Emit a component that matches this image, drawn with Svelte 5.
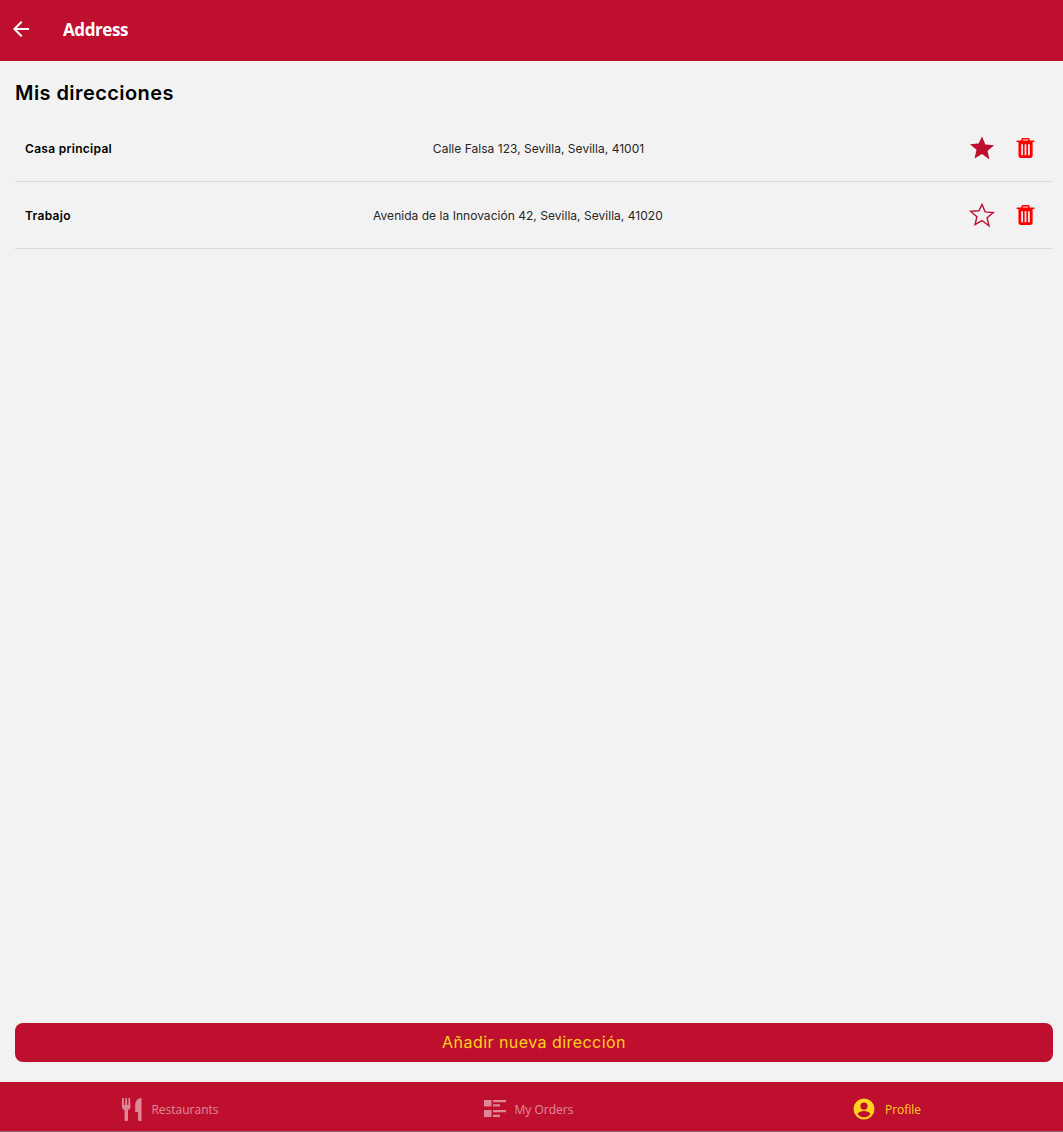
<script>
  const addresses = [
    { name: 'Casa principal', line: 'Calle Falsa 123, Sevilla, Sevilla, 41001', fav: true },
    { name: 'Trabajo', line: 'Avenida de la Innovación 42, Sevilla, Sevilla, 41020', fav: false }
  ];
  const star = 'M12 2.2l2.9 6.9 7.5.6-5.7 4.9 1.7 7.3L12 17.1l-6.4 3.8 1.7-7.3-5.7-4.9 7.5-.6z';
</script>

<div class="page">
  <header class="top">
    <svg class="back" viewBox="0 0 24 24" width="24" height="24"><path d="M20 11H7.83l5.59-5.59L12 4l-8 8 8 8 1.41-1.41L7.83 13H20z" fill="#fff"/></svg>
    <span class="title">Address</span>
  </header>

  <main class="content">
    <h1>Mis direcciones</h1>
    <div class="list">
      {#each addresses as a}
        <div class="row">
          <span class="name">{a.name}</span>
          <span class="line">{a.line}</span>
          <div class="actions">
            <svg class="star" viewBox="0 0 24 24" width="28" height="28">
              {#if a.fav}
                <path d={star} fill="#be0f2e"/>
              {:else}
                <path d={star} fill="none" stroke="#be0f2e" stroke-width="1.3" transform="translate(12 12) scale(.93) translate(-12 -12)"/>
              {/if}
            </svg>
            <svg class="trash" viewBox="0 0 20 24" width="19" height="24">
              <path fill="#f00" fill-rule="evenodd" d="M7 1.5h6a1.2 1.2 0 0 1 1.2 1.1l.3 1.4h4.2a.7.7 0 0 1 .7.7v1h-1.9v14.300c0 1.500-1 2.500-2.400 2.500H5c-1.400 0-2.400-1-2.400-2.500V5.700H.6v-1a.7.7 0 0 1 .7-.7h4.200l.3-1.400A1.200 1.200 0 0 1 7 1.500zM7.300 3l-.2 1h5.800l-.2-1zM5.500 8v11.500h1.800V8zm3.600 0v11.500h1.800V8zm3.600 0v11.500h1.800V8z"/>
            </svg>
          </div>
        </div>
      {/each}
    </div>
    <button class="add">Añadir nueva dirección</button>
  </main>

  <nav class="tabs">
    <div class="tab dim">
      <svg viewBox="0 0 20 24" width="20" height="24"><path fill="#fff" d="M0 1h1.800l.2 7h1.100l.3-7h1.500l.3 7h1.100l.2-7H8l.5 8.500c0 1.800-1 3-2.500 3.400L6 23a1 1 0 0 1-1 1H3.600a1 1 0 0 1-1-1l-.1-10.100C1 12.500 0 11.300 0 9.500zM19.500 1v22a1 1 0 0 1-1 1h-1.400a1 1 0 0 1-1-1v-8h-2.900V8c0-3.500 2.300-7 6.300-7z"/></svg>
      <span>Restaurants</span>
    </div>
    <div class="tab dim">
      <svg viewBox="0 0 22 18" width="22" height="18"><path fill="#fff" d="M0 0h7.500v6.500H0zM9 0h13v2.200H9zM9 4.300h7v2.200H9zM0 10h7.500v7H0zM9 10h13v2.200H9zM9 14.800h7V17H9z"/></svg>
      <span>My Orders</span>
    </div>
    <div class="tab active">
      <svg viewBox="0 0 24 24" width="24" height="24"><path fill="#ffd21f" d="M12 1.500a10.500 10.500 0 1 0 0 21 10.500 10.500 0 0 0 0-21zm0 4a3.600 3.600 0 1 1 0 7.200 3.600 3.600 0 0 1 0-7.200zm0 14.800c-2.600 0-4.900-1.200-6.300-3.100.1-2 4.200-3.100 6.300-3.100s6.200 1.100 6.300 3.100c-1.400 1.900-3.700 3.100-6.300 3.100z"/></svg>
      <span>Profile</span>
    </div>
  </nav>
</div>

<style>
  :global(body) { margin: 0; background: #f2f2f2; }
  .page {
    width: 1063px;
    height: 1132px;
    display: flex;
    flex-direction: column;
    background: #f2f2f2;
    overflow: hidden;
  }
  .top {
    height: 61px;
    flex: none;
    background: #be0f2e;
    display: flex;
    align-items: center;
    padding-left: 9px;
    box-sizing: border-box;
  }
  .back { margin-top: -3px; }
  .title {
    margin-left: 30px;
    color: #fff;
    font: 700 17px "Open Sans", "Noto Sans", sans-serif;
    letter-spacing: -0.4px;
    margin-top: -3px;
  }
  .content {
    flex: 1;
    display: flex;
    flex-direction: column;
    padding: 0 10px 20px 15px;
    min-height: 0;
  }
  h1 {
    margin: 19px 0 0;
    height: 27px;
    font: 600 20px/27px Inter, "Noto Sans", sans-serif;
    color: #000;
    letter-spacing: 0.43px;
  }
  .list { flex: 1; margin-top: 8px; }
  .row {
    height: 67px;
    box-sizing: border-box;
    border-bottom: 1px solid #d9d9d9;
    display: flex;
    justify-content: space-between;
    align-items: center;
    padding: 0 18px 0 10px;
    font-family: Inter, "Noto Sans", sans-serif;
  }
  .name { font-size: 12px; font-weight: 600; color: #000; letter-spacing: 0.3px; }
  .line { font-size: 12px; color: #262626; letter-spacing: 0.03px; }
  .actions {
    display: flex;
    align-items: center;
    gap: 20px;
    padding-left: 3px;
    margin-top: -1px;
  }
  .star, .trash { display: block; }
  .add {
    height: 39px;
    flex: none;
    border: 0;
    border-radius: 8px;
    background: #be0f2e;
    color: #ffd21f;
    font: 400 16px Inter, "Noto Sans", sans-serif;
    letter-spacing: 0.45px;
    padding: 0 0 2px;
  }
  .tabs {
    height: 50px;
    flex: none;
    display: grid;
    grid-template-columns: 341px 375px 341px;
    background: #be0f2e;
    border-bottom: 1px solid #8a6a70;
    box-sizing: border-box;
  }
  .tab {
    display: flex;
    align-items: center;
    justify-content: center;
    gap: 9px;
    padding-top: 5px;
    font: 12px "Open Sans", "Noto Sans", sans-serif;
  }
  .tab.dim { color: #fff; opacity: 0.5; }
  .tab.active { color: #ffd21f; }
</style>
